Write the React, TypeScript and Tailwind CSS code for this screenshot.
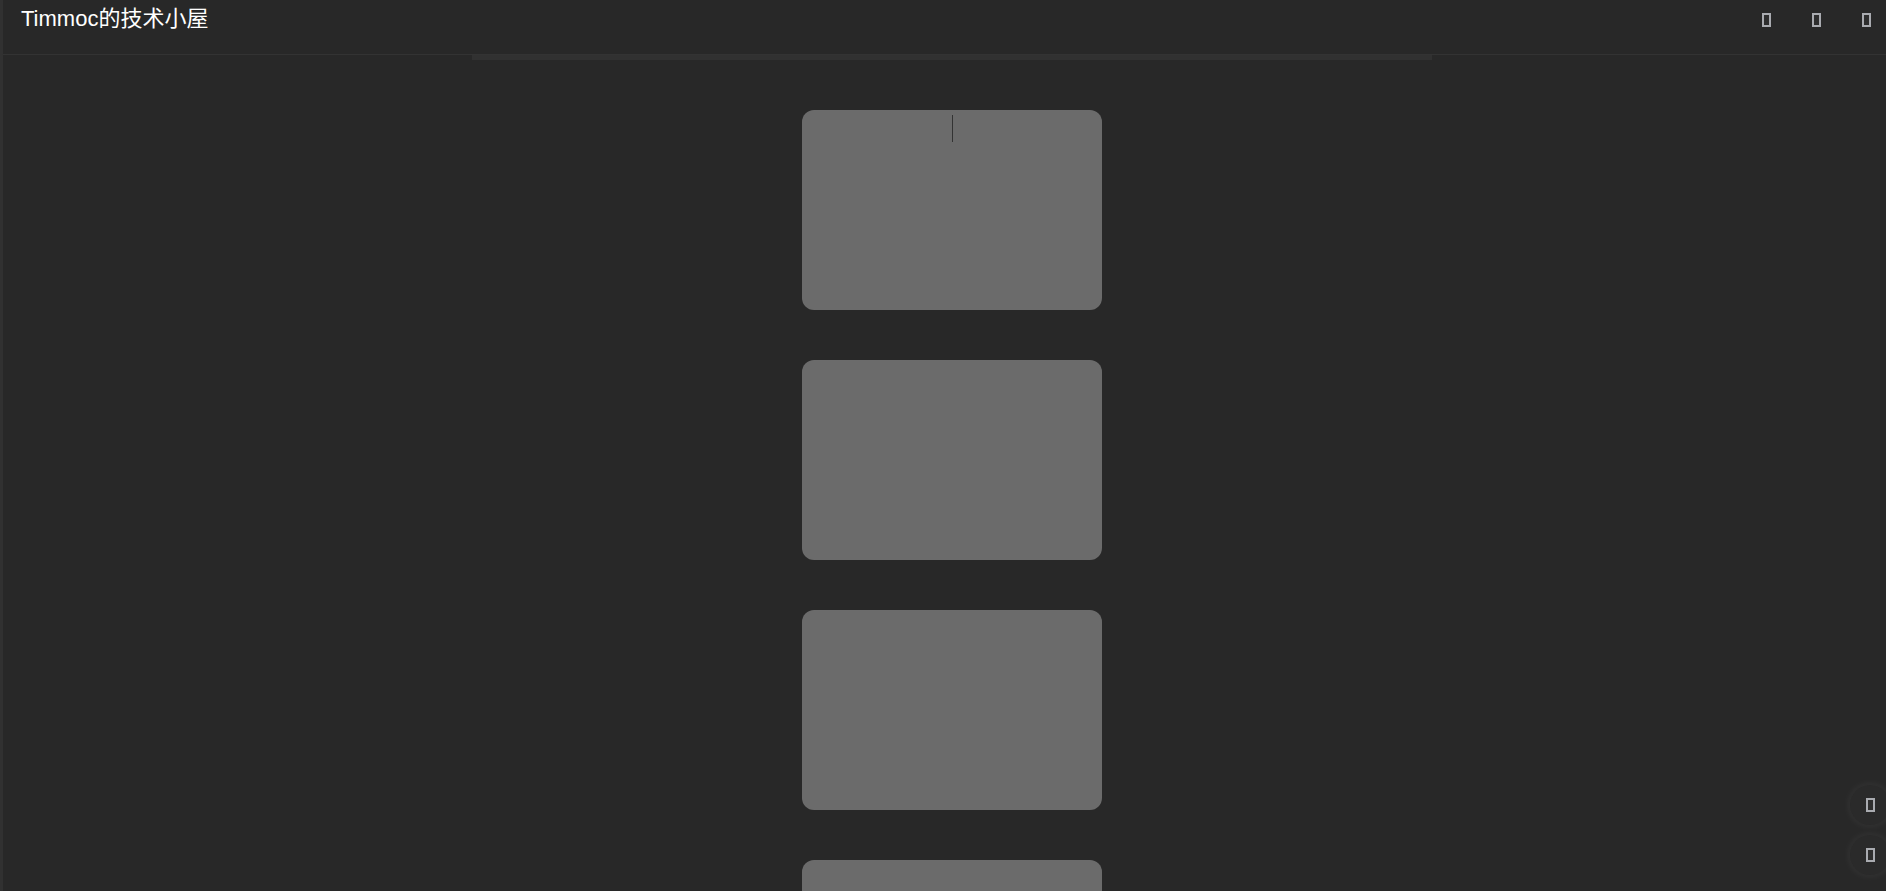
import { ReactNode } from 'react';

function Tofu({ className = '' }: { className?: string }) {
  // missing-glyph box, as the icon font failed to load in the reference
  return <span className={`inline-block w-[9px] h-[14px] border-2 border-[#a9abb0] bg-[#2e2e2e] ${className}`} />;
}

function FloatBtn({ children }: { children: ReactNode }) {
  return (
    <button className="w-[40px] h-[40px] rounded-full bg-[#2a2a2a] shadow-[0_0_10px_rgba(255,255,255,0.08)] flex items-center justify-center">
      {children}
    </button>
  );
}

export default function App() {
  const cards = [0, 1, 2, 3];

  return (
    <div className="h-[891px] overflow-hidden bg-[#282828] border-l-[3px] border-[#313131] relative" style={{ fontFamily: '"Liberation Sans", "Noto Sans CJK SC", sans-serif' }}>
      <header className="h-[55px] border-b border-[#333333] flex items-start justify-between pl-[18px] pr-[15px]">
        <h1 className="text-white text-[22px] leading-none pt-[8px]">Timmoc的技术小屋</h1>
        <div className="flex items-center gap-[41px] pt-[13px]">
          <Tofu />
          <Tofu />
          <Tofu />
        </div>
      </header>

      <main className="w-[960px] ml-[469px]">
        <div className="h-[5px] bg-[#313131]" />
        <div className="flex flex-col items-center gap-[50px] pt-[50px]">
          {cards.map((i) => (
            <div key={i} className="relative w-[300px] h-[200px] shrink-0 rounded-[12px] bg-[#6b6b6b]">
              {i === 0 && <span className="absolute left-[150px] top-[5px] w-px h-[27px] bg-[#333333]" />}
            </div>
          ))}
        </div>
      </main>

      <div className="absolute right-[-4px] top-[785px] flex flex-col gap-[10px]">
        <FloatBtn>
          <Tofu />
        </FloatBtn>
        <FloatBtn>
          <Tofu />
        </FloatBtn>
      </div>
    </div>
  );
}
